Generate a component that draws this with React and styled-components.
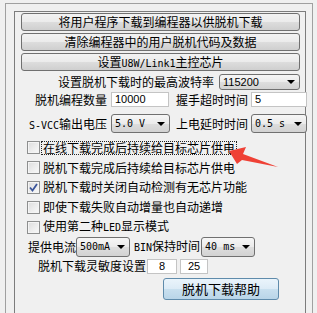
import React from "react";
import styled, { createGlobalStyle } from "styled-components";

const GlobalStyle = createGlobalStyle`
  html, body, #root {
    margin: 0 !important;
    padding: 0;
    background: #f0f0f0;
  }
  body {
    font-family: "Noto Sans CJK SC", sans-serif;
    font-size: 12px;
    color: #000;
    overflow: hidden;
  }
`;

const Page = styled.div`
  position: relative;
  width: 317px;
  height: 313px;
  overflow: hidden;
  box-sizing: border-box;
  padding: 3px 0 0 5px;
`;

const OuterFrame = styled.div`
  width: 308px;
  height: 330px;
  box-sizing: border-box;
  border: 1px solid #a0a0a0;
  border-bottom: none;
  padding: 7px 6px 0 8px;
`;

const Panel = styled.div`
  height: 330px;
  box-sizing: border-box;
  border: 1px solid #7c7c7c;
  border-bottom: none;
  padding: 1px 5px 0 6px;
  display: flex;
  flex-direction: column;
`;

const WideButton = styled.div`
  height: 18px;
  margin-bottom: 2px;
  box-sizing: border-box;
  border: 1px solid #707070;
  border-radius: 3px;
  background: linear-gradient(#f2f2f2, #ebebeb 50%, #dddddd 50%, #cfcfcf);
  line-height: 16px;
  text-align: center;
  white-space: nowrap;
`;

const Half = styled.span`
  font-family: "DejaVu Sans Mono", monospace;
  font-size: 10px;
`;

const Text = styled.span`
  white-space: nowrap;
  line-height: 14px;
`;

const Select = styled.div`
  width: ${(p) => p.$w}px;
  height: ${(p) => p.$h || 19}px;
  box-sizing: border-box;
  border: 1px solid #707070;
  border-radius: 3px;
  background: linear-gradient(#f6f6f6, #ebebeb 50%, #dedede 50%, #d2d2d2);
  display: flex;
  align-items: center;
  justify-content: space-between;
  padding: 0 4px 0 3px;
  white-space: nowrap;
  font-family: ${(p) =>
    p.$mono ? '"DejaVu Sans Mono", monospace' : '"Liberation Sans", sans-serif'};
  font-size: ${(p) => (p.$mono ? "10px" : "11px")};
`;

const Caret = styled.span`
  width: 0;
  height: 0;
  border-left: 4px solid transparent;
  border-right: 4px solid transparent;
  border-top: 4px solid #000;
  flex: none;
`;

const Field = styled.div`
  width: ${(p) => p.$w}px;
  height: 15px;
  box-sizing: border-box;
  border: 1px solid #c4c4c4;
  background: #fff;
  padding-left: ${(p) => (p.$center ? 0 : 3)}px;
  text-align: ${(p) => (p.$center ? "center" : "left")};
  font-family: "Liberation Sans", sans-serif;
  font-size: 11px;
  line-height: 13px;
`;

const BaudRow = styled.div`
  height: 17px;
  display: flex;
  justify-content: flex-end;
  align-items: center;
  gap: 5px;
`;

const PairRow = styled.div`
  height: ${(p) => p.$h}px;
  margin-top: ${(p) => p.$mt || 0}px;
  display: grid;
  grid-template-columns: 90px 60px 80px 56px;
  align-items: center;
`;

const PairLabel = styled.span`
  white-space: nowrap;
  text-align: ${(p) => (p.$left ? "left" : "right")};
  padding: ${(p) => (p.$left ? "0 0 0 5px" : "0 4px 0 0")};
`;

const CheckList = styled.div`
  margin-top: 5px;
  display: flex;
  flex-direction: column;
`;

const CheckRow = styled.div`
  height: 19.8px;
  display: flex;
  align-items: center;
  padding-left: 6px;
`;

const Box = styled.span`
  width: 13px;
  height: 13px;
  box-sizing: border-box;
  border: 1px solid #8e8f8f;
  background: linear-gradient(135deg, #dcdcdc, #f4f4f4 80%);
  box-shadow: inset 0 0 0 1px #f4f4f4;
  display: flex;
  align-items: center;
  justify-content: center;
  flex: none;
`;

const CheckText = styled.span`
  white-space: nowrap;
  line-height: 12px;
  margin-left: 1px;
  padding: 0 1px;
  border: 1px dotted ${(p) => (p.$focus ? "#222" : "transparent")};
`;

const SupplyRow = styled.div`
  height: 20px;
  display: flex;
  align-items: center;
  padding-left: 7px;
`;

const Gap = styled.span`
  width: ${(p) => p.$w}px;
  flex: none;
`;

const SenseRow = styled.div`
  height: 19px;
  display: flex;
  align-items: center;
  padding-left: 17px;
`;

const HelpButton = styled.div`
  width: 116px;
  height: 22px;
  margin: 2px 0 0 142px;
  box-sizing: border-box;
  border: 1px solid #5f8bab;
  border-radius: 3px;
  background: linear-gradient(#eaf4fb, #dcebf6 50%, #c9e0ef 50%, #b9d5e8);
  text-align: center;
  line-height: 20px;
  font-size: 13px;
`;

// red annotation arrow drawn over the form
const Arrow = styled.svg`
  position: absolute;
  left: 225px;
  top: 143px;
`;

const checks = [
  { text: "在线下载完成后持续给目标芯片供电", focus: true },
  { text: "脱机下载完成后持续给目标芯片供电" },
  { text: "脱机下载时关闭自动检测有无芯片功能", checked: true },
  { text: "即使下载失败自动增量也自动递增" },
  { text: <>使用第二种<Half>LED</Half>显示模式</> },
];

const Check = ({ checked, focus, children }) => (
  <CheckRow>
    <Box>
      {checked && (
        <svg width="9" height="9" viewBox="0 0 9 9">
          <path d="M1 4.5 L3.5 7.5 L8 1" fill="none" stroke="#3b559a" strokeWidth="1.8" />
        </svg>
      )}
    </Box>
    <CheckText $focus={focus}>{children}</CheckText>
  </CheckRow>
);

export default function App() {
  return (
    <>
      <GlobalStyle />
      <Page>
        <OuterFrame>
          <Panel>
            <WideButton>将用户程序下载到编程器以供脱机下载</WideButton>
            <WideButton>清除编程器中的用户脱机代码及数据</WideButton>
            <WideButton>
              设置<Half>U8W/Link1</Half>主控芯片
            </WideButton>
            <BaudRow>
              <Text>设置脱机下载时的最高波特率</Text>
              <Select $w={81} $h={16}>
                115200
                <Caret />
              </Select>
            </BaudRow>
            <PairRow $h={18}>
              <PairLabel>脱机编程数量</PairLabel>
              <Field $w={58}>10000</Field>
              <PairLabel $left>握手超时时间</PairLabel>
              <Field $w={56}>5</Field>
            </PairRow>
            <PairRow $h={19} $mt={6}>
              <PairLabel>
                <Half>S-VCC</Half>输出电压
              </PairLabel>
              <Select $w={59} $mono>
                5.0 V
                <Caret />
              </Select>
              <PairLabel $left>上电延时时间</PairLabel>
              <Select $w={56} $mono>
                0.5 s
                <Caret />
              </Select>
            </PairRow>
            <CheckList>
              {checks.map((c, i) => (
                <Check key={i} checked={c.checked} focus={c.focus}>
                  {c.text}
                </Check>
              ))}
            </CheckList>
            <SupplyRow>
              <Text>提供电流</Text>
              <Select $w={54} $h={20} $mono>
                500mA
                <Caret />
              </Select>
              <Gap $w={4} />
              <Text>
                <Half>BIN</Half>保持时间
              </Text>
              <Gap $w={1} />
              <Select $w={54} $h={20} $mono>
                40 ms
                <Caret />
              </Select>
            </SupplyRow>
            <SenseRow>
              <Text>脱机下载灵敏度设置</Text>
              <Gap $w={1} />
              <Field $w={30} $center>8</Field>
              <Gap $w={3} />
              <Field $w={28} $center>25</Field>
            </SenseRow>
            <HelpButton>脱机下载帮助</HelpButton>
          </Panel>
        </OuterFrame>
        <Arrow width="56" height="26" viewBox="0 0 56 26">
          <polygon points="4,8 21,4 18,11 53,24 17,17 12,21" fill="#ef4136" />
        </Arrow>
      </Page>
    </>
  );
}
